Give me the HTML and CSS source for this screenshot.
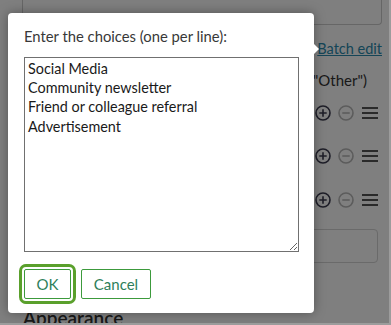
FILE: index.html
```html
<!DOCTYPE html>
<html>
<head>
<meta charset="utf-8">
<link rel="stylesheet" href="styles.css">
</head>
<body>
<div class="page">
  <div class="topbox"></div>
  <div class="link-row"><a class="batch" href="#">Batch edit</a></div>
  <div class="label-row"><span class="label">Choices (Allow "Other")</span></div>
  <div class="choice-row">
    <div class="choice-input"></div>
    <svg class="ico plus" viewBox="0 0 16 16"><circle cx="8" cy="8" r="7"/><path d="M8 4.3v7.4M4.3 8h7.4"/></svg>
    <svg class="ico minus" viewBox="0 0 16 16"><circle cx="8" cy="8" r="7"/><path d="M4.3 8h7.4"/></svg>
    <svg class="ico menu" viewBox="0 0 16 16"><path d="M0 3h16M0 8h16M0 13h16"/></svg>
  </div>
  <div class="choice-row">
    <div class="choice-input"></div>
    <svg class="ico plus" viewBox="0 0 16 16"><circle cx="8" cy="8" r="7"/><path d="M8 4.3v7.4M4.3 8h7.4"/></svg>
    <svg class="ico minus" viewBox="0 0 16 16"><circle cx="8" cy="8" r="7"/><path d="M4.3 8h7.4"/></svg>
    <svg class="ico menu" viewBox="0 0 16 16"><path d="M0 3h16M0 8h16M0 13h16"/></svg>
  </div>
  <div class="choice-row">
    <div class="choice-input"></div>
    <svg class="ico plus" viewBox="0 0 16 16"><circle cx="8" cy="8" r="7"/><path d="M8 4.3v7.4M4.3 8h7.4"/></svg>
    <svg class="ico minus" viewBox="0 0 16 16"><circle cx="8" cy="8" r="7"/><path d="M4.3 8h7.4"/></svg>
    <svg class="ico menu" viewBox="0 0 16 16"><path d="M0 3h16M0 8h16M0 13h16"/></svg>
  </div>
  <div class="other-box"></div>
  <h2 class="section">Appearance</h2>
</div>
<div class="overlay"></div>
<div class="dialog">
  <div class="prompt">Enter the choices (one per line):</div>
  <textarea class="choices">Social Media
Community newsletter
Friend or colleague referral
Advertisement</textarea>
  <div class="actions">
    <button class="btn ok">OK</button>
    <button class="btn cancel">Cancel</button>
  </div>
</div>
<div class="frame"></div>
</body>
</html>
```

FILE: styles.css
```css
html, body {
  margin: 0;
  padding: 0;
  height: 325px;
  overflow: hidden;
  background: #ffffff;
  font-family: "Lato", "Noto Sans", sans-serif;
}

.page {
  padding: 0 9px 0 22px;
  color: #333333;
}

.topbox {
  height: 25px;
  box-sizing: border-box;
  border: 1px solid #cccccc;
  border-top: none;
  border-radius: 0 0 4px 4px;
}

.link-row {
  display: flex;
  justify-content: flex-end;
  margin-top: 14px;
  height: 20px;
  line-height: 20px;
  font-size: 14.5px;
}

.batch {
  color: #2a8aae;
  text-decoration: underline;
}

.label-row {
  display: flex;
  justify-content: flex-end;
  padding-right: 15px;
  margin-top: 11px;
  height: 20px;
  line-height: 20px;
  font-size: 15px;
}

.choice-row {
  display: flex;
  align-items: center;
  gap: 7px;
  padding-right: 4px;
  height: 43.5px;
}

.label-row + .choice-row {
  margin-top: 1px;
}

.choice-input {
  flex: 1;
  height: 32px;
  box-sizing: border-box;
  border: 1px solid #d4d4d4;
  border-radius: 4px;
}

.ico {
  width: 16px;
  height: 16px;
  fill: none;
  stroke-width: 1.6;
}

.plus {
  stroke: #3c3c50;
}

.minus {
  stroke: #b8b8b8;
}

.menu {
  stroke: #555555;
  stroke-width: 2.2;
  margin-left: 1px;
}

.other-box {
  margin: 7px 4px 0 0;
  height: 34px;
  box-sizing: border-box;
  border: 1px solid #d4d4d4;
  border-radius: 4px;
}

.section {
  margin: 43px 0 0 1px;
  font-size: 19px;
  font-weight: 600;
  line-height: 24px;
  color: #333333;
}

.overlay {
  position: absolute;
  inset: 0;
  background: rgba(0, 0, 0, 0.5);
}

.dialog {
  position: absolute;
  left: 8px;
  top: 13px;
  width: 306px;
  height: 300px;
  box-sizing: border-box;
  padding: 14px 15px 14px 16px;
  background: #ffffff;
  border-radius: 4px;
  box-shadow: 0 0 12px rgba(0, 0, 0, 0.35);
  display: flex;
  flex-direction: column;
}

.dialog::after {
  content: "";
  position: absolute;
  right: -5px;
  top: 31px;
  width: 0;
  height: 0;
  border-top: 5px solid transparent;
  border-bottom: 5px solid transparent;
  border-left: 5px solid #ffffff;
}

.prompt {
  font-size: 14.8px;
  line-height: 18px;
  color: #383838;
  white-space: nowrap;
}

.choices {
  margin: 12px 0 0 0;
  width: 275px;
  height: 195px;
  box-sizing: border-box;
  border: 1px solid #707070;
  border-radius: 0;
  padding: 1px 3px;
  font-family: "Lato", "Noto Sans", sans-serif;
  font-size: 14.4px;
  line-height: 19.2px;
  color: #1a1a1a;
  outline: none;
}

.actions {
  display: flex;
  gap: 10px;
  margin-top: 17px;
}

.btn {
  height: 30px;
  box-sizing: border-box;
  padding: 0;
  background: #ffffff;
  border: 1px solid #3c9a3c;
  border-radius: 2px;
  font-family: "Lato", "Noto Sans", sans-serif;
  font-size: 15px;
  color: #2e7f5a;
}

.btn.ok {
  width: 47px;
  outline: 3px solid #5aa02c;
  outline-offset: 2px;
}

.btn.cancel {
  width: 70px;
}

.frame {
  position: absolute;
  inset: 0;
  border-right: 2px solid #9c9c9c;
  border-bottom: 2px solid #9c9c9c;
  pointer-events: none;
}
```
